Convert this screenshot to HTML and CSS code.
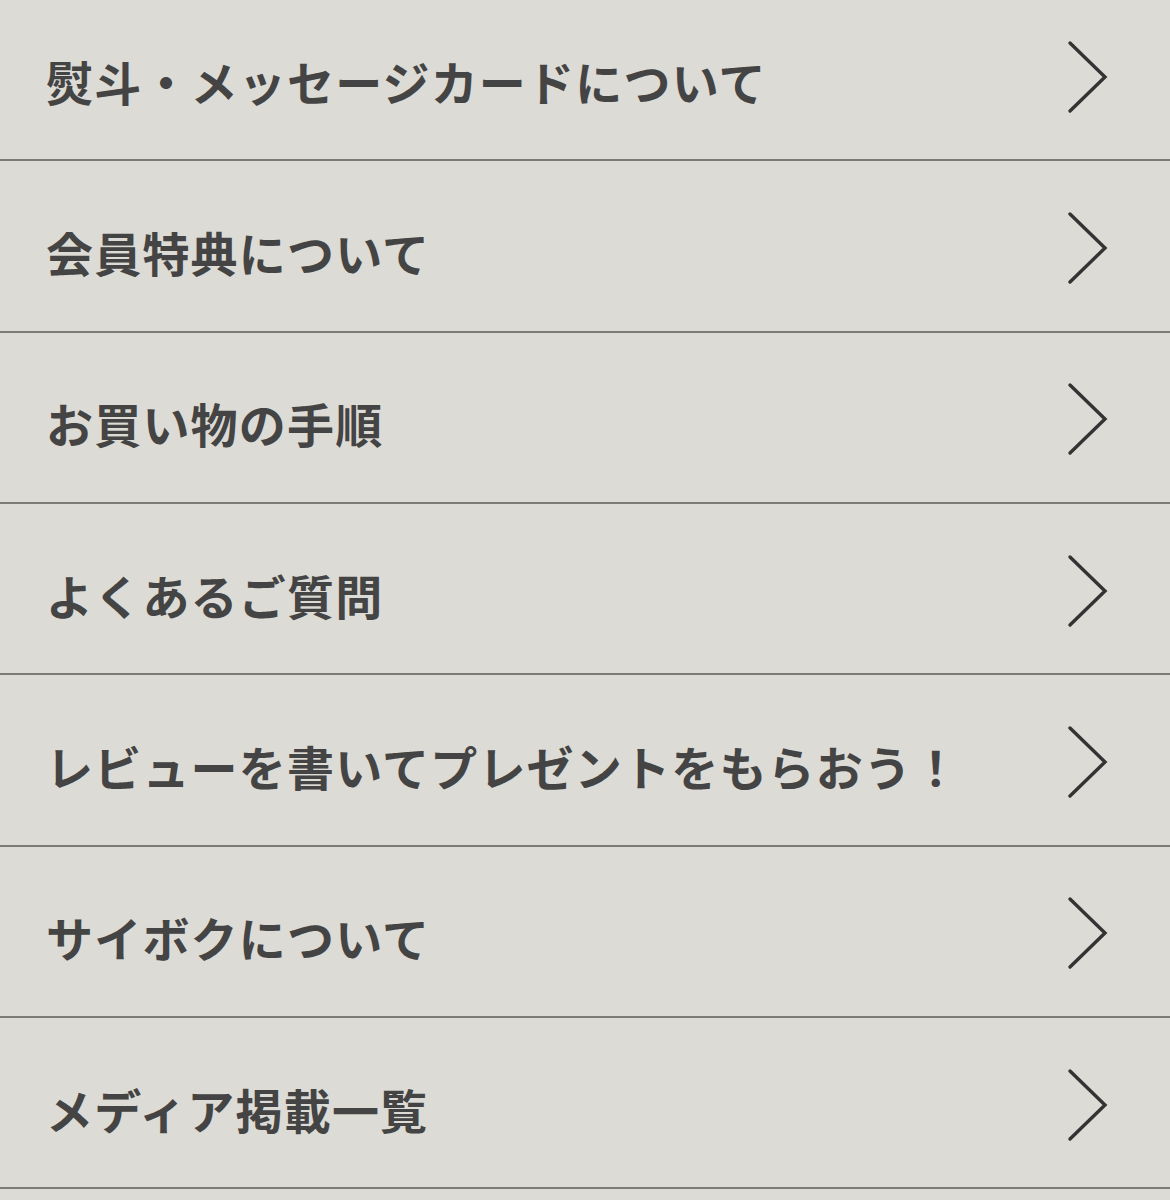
FILE: index.html
```html
<!DOCTYPE html>
<html lang="ja">
<head>
<meta charset="utf-8">
<title>メニュー</title>
<link rel="stylesheet" href="styles.css">
</head>
<body>
<ul class="menu">
  <li class="item"><a class="link" href="#"><span class="label">熨斗・メッセージカードについて</span><svg class="chev" viewBox="0 0 44 76" width="44" height="76"><polyline points="4,4 39,38 4,72"/></svg></a></li>
  <li class="item"><a class="link" href="#"><span class="label">会員特典について</span><svg class="chev" viewBox="0 0 44 76" width="44" height="76"><polyline points="4,4 39,38 4,72"/></svg></a></li>
  <li class="item"><a class="link" href="#"><span class="label">お買い物の手順</span><svg class="chev" viewBox="0 0 44 76" width="44" height="76"><polyline points="4,4 39,38 4,72"/></svg></a></li>
  <li class="item"><a class="link" href="#"><span class="label">よくあるご質問</span><svg class="chev" viewBox="0 0 44 76" width="44" height="76"><polyline points="4,4 39,38 4,72"/></svg></a></li>
  <li class="item"><a class="link" href="#"><span class="label">レビューを書いてプレゼントをもらおう！</span><svg class="chev" viewBox="0 0 44 76" width="44" height="76"><polyline points="4,4 39,38 4,72"/></svg></a></li>
  <li class="item"><a class="link" href="#"><span class="label">サイボクについて</span><svg class="chev" viewBox="0 0 44 76" width="44" height="76"><polyline points="4,4 39,38 4,72"/></svg></a></li>
  <li class="item"><a class="link" href="#"><span class="label">メディア掲載一覧</span><svg class="chev" viewBox="0 0 44 76" width="44" height="76"><polyline points="4,4 39,38 4,72"/></svg></a></li>
</ul>
</body>
</html>
```

FILE: styles.css
```css
html, body {
  margin: 0;
  padding: 0;
  background: #dcdbd5;
}
body {
  font-family: "Noto Sans CJK JP", "Noto Sans", sans-serif;
  color: #444444;
  overflow: hidden;
}
.menu {
  list-style: none;
  margin: -10px 0 0 0;
  padding: 0;
}
.item {
  height: 171.33px;
  box-sizing: border-box;
  border-bottom: 2px solid #7b7b78;
}
.link {
  display: flex;
  align-items: center;
  justify-content: space-between;
  height: 100%;
  box-sizing: border-box;
  padding: 4px 60px 0 46px;
  text-decoration: none;
  color: inherit;
}
.label {
  font-size: 47px;
  font-weight: 700;
  letter-spacing: 1.2px;
  line-height: 1;
  padding-top: 7px;
}
.chev {
  display: block;
  fill: none;
  stroke: #333333;
  stroke-width: 3.4;
  stroke-linecap: round;
  stroke-linejoin: miter;
}
```
